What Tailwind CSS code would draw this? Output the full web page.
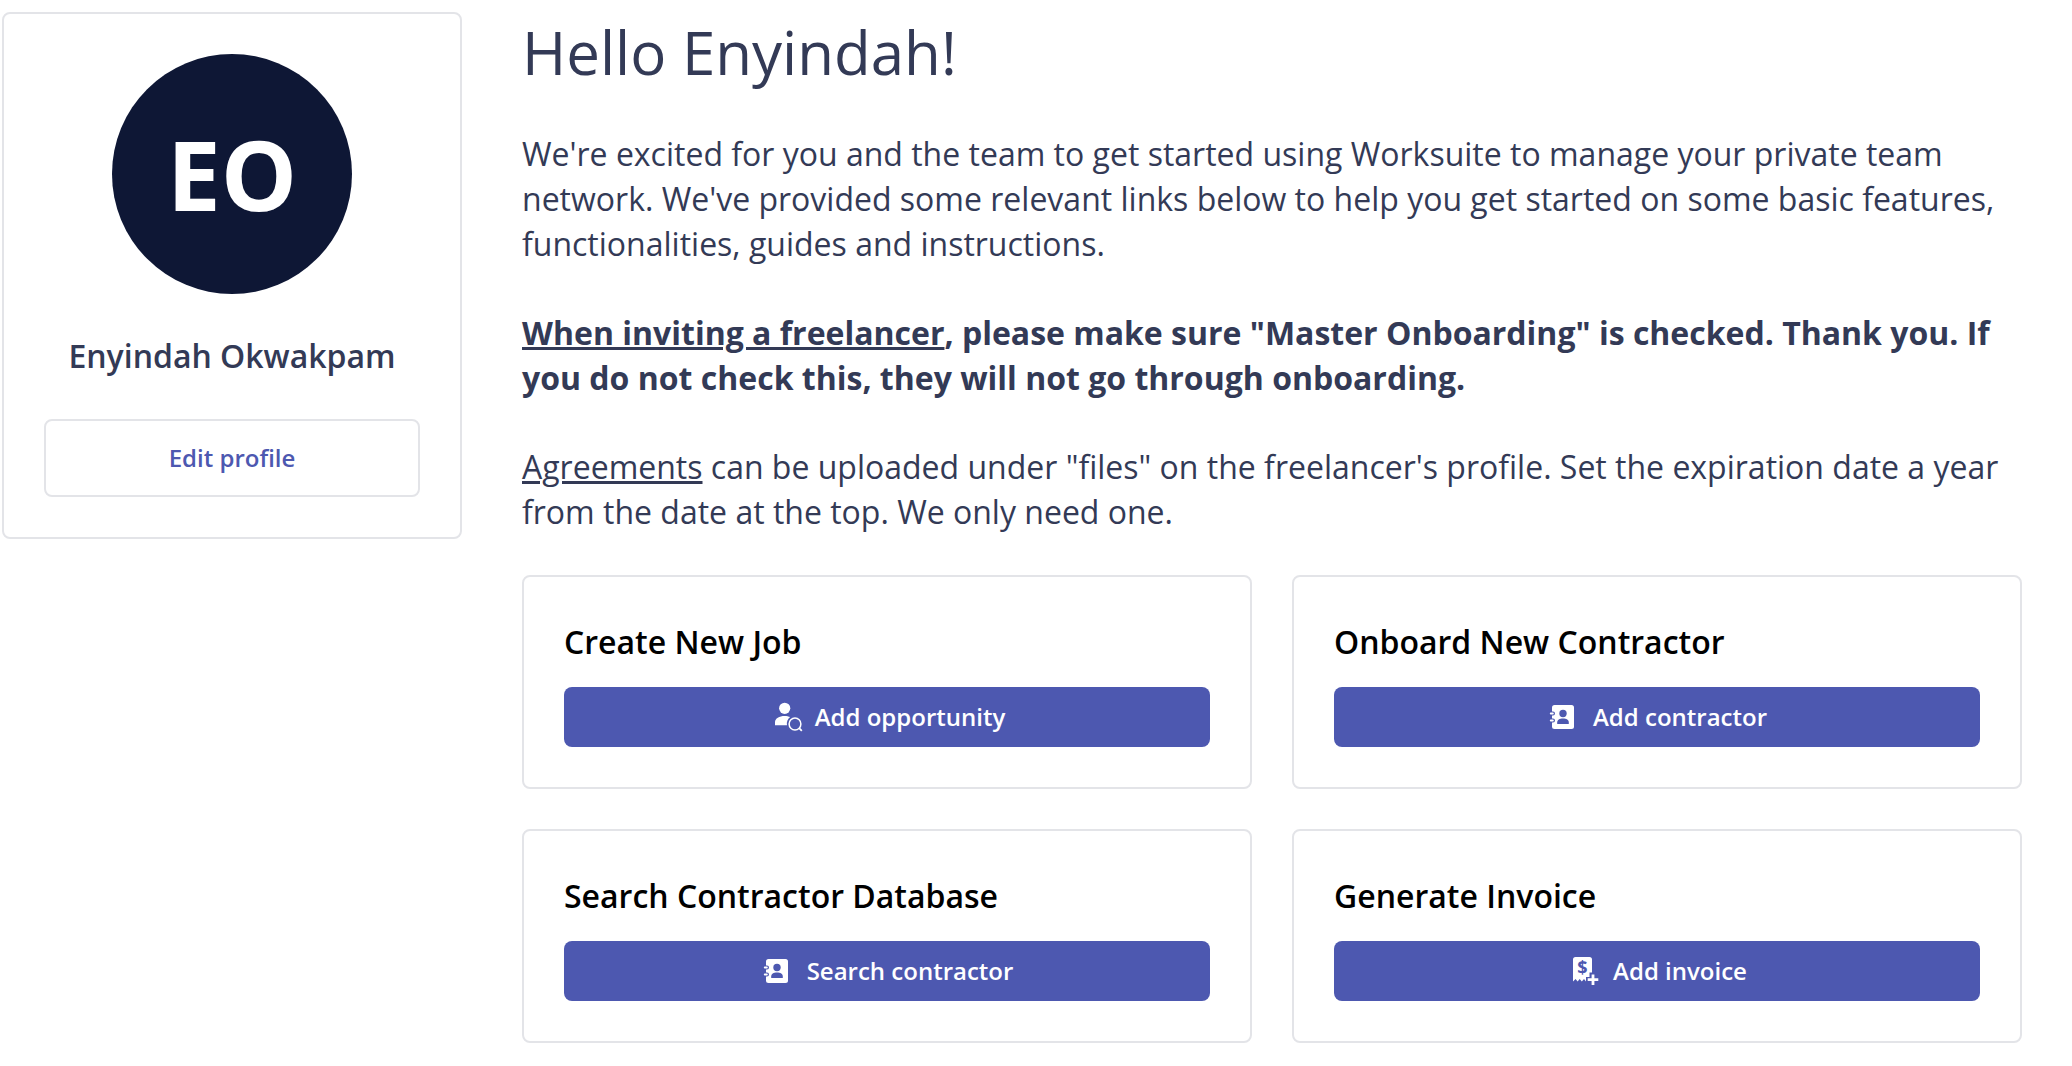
<!DOCTYPE html>
<html lang="en">
<head>
  <meta charset="UTF-8">
  <meta name="viewport" content="width=device-width, initial-scale=1.0">
  <title>Worksuite - Home</title>
  <script src="https://cdn.jsdelivr.net/npm/@tailwindcss/browser@4"></script>
</head>
<body class="bg-white font-['Open_Sans',sans-serif] text-[#333a56]">
  <div class="flex items-start gap-[60px] pt-3 pr-[50px] pb-5 pl-0.5">

    <!-- Profile card -->
    <aside class="flex w-[460px] shrink-0 flex-col items-center rounded-lg border-2 border-[#e3e4e8] p-10">
      <div class="flex size-60 items-center justify-center rounded-full bg-[#0e1735] text-8xl font-bold text-white">EO</div>
      <h2 class="mt-10 text-[32px] leading-[43px] font-semibold">Enyindah Okwakpam</h2>
      <button type="button" class="mt-[42px] h-[78px] w-full rounded-lg border-2 border-[#e3e4e8] text-2xl font-semibold text-[#4d58b0]">Edit profile</button>
    </aside>

    <main class="min-w-0 flex-1">
      <h1 class="text-[60px] leading-20">Hello Enyindah!</h1>

      <div class="mt-[39px] flex flex-col gap-11 text-[32px] leading-[45px]">
        <p>We're excited for you and the team to get started using Worksuite to manage your private team network. We've provided some relevant links below to help you get started on some basic features, functionalities, guides and instructions.</p>
        <p class="font-bold"><a href="#" class="underline">When inviting a freelancer</a>, please make sure "Master Onboarding" is checked. Thank you. If you do not check this, they will not go through onboarding.</p>
        <p><a href="#" class="underline">Agreements</a> can be uploaded under "files" on the freelancer's profile. Set the expiration date a year from the date at the top. We only need one.</p>
      </div>

      <!-- Quick actions -->
      <div class="mt-[41px] grid grid-cols-2 gap-10 text-black">
        <section class="rounded-lg border-2 border-[#e3e4e8] p-10">
          <h3 class="mb-[21px] text-[32px] leading-[49px] font-semibold">Create New Job</h3>
          <button type="button" class="flex h-15 w-full items-center justify-center gap-2.5 rounded-lg bg-[#4d58b0] text-2xl font-semibold text-white">
            <svg class="size-9" viewBox="0 0 36 36" fill="none" aria-hidden="true">
              <circle cx="15.7" cy="9.3" r="5.6" fill="#fff"/>
              <path d="M6 26.3v-3.1c0-3.8 4.3-6.2 9.7-6.2 2 0 3.9.4 5.4 1.1A8.6 8.6 0 0 0 18 26.3z" fill="#fff"/>
              <circle cx="26" cy="25" r="5.9" stroke="#fff" stroke-width="1.5"/>
              <path d="M30.2 29.2l2.6 2.6" stroke="#fff" stroke-width="1.8"/>
            </svg>
            Add opportunity
          </button>
        </section>

        <section class="rounded-lg border-2 border-[#e3e4e8] p-10">
          <h3 class="mb-[21px] text-[32px] leading-[49px] font-semibold">Onboard New Contractor</h3>
          <button type="button" class="flex h-15 w-full items-center justify-center gap-2.5 rounded-lg bg-[#4d58b0] text-2xl font-semibold text-white">
            <svg class="size-9" viewBox="0 0 36 36" fill="none" aria-hidden="true">
              <rect x="5" y="6" width="22" height="24" rx="2.5" fill="#fff"/>
              <path d="M4 14.5h2M4 21.5h2" stroke="#4d58b0" stroke-width="4" stroke-linecap="round"/>
              <path d="M3.8 14.5h2M3.8 21.5h2" stroke="#fff" stroke-width="2" stroke-linecap="round"/>
              <circle cx="16" cy="14.5" r="3.7" fill="#4d58b0"/>
              <path d="M10.2 25v-1.6c0-2.7 2.3-4 5.8-4s5.8 1.3 5.8 4V25z" fill="#4d58b0"/>
            </svg>
            Add contractor
          </button>
        </section>

        <section class="rounded-lg border-2 border-[#e3e4e8] p-10">
          <h3 class="mb-[21px] text-[32px] leading-[49px] font-semibold">Search Contractor Database</h3>
          <button type="button" class="flex h-15 w-full items-center justify-center gap-2.5 rounded-lg bg-[#4d58b0] text-2xl font-semibold text-white">
            <svg class="size-9" viewBox="0 0 36 36" fill="none" aria-hidden="true">
              <rect x="5" y="6" width="22" height="24" rx="2.5" fill="#fff"/>
              <path d="M4 14.5h2M4 21.5h2" stroke="#4d58b0" stroke-width="4" stroke-linecap="round"/>
              <path d="M3.8 14.5h2M3.8 21.5h2" stroke="#fff" stroke-width="2" stroke-linecap="round"/>
              <circle cx="16" cy="14.5" r="3.7" fill="#4d58b0"/>
              <path d="M10.2 25v-1.6c0-2.7 2.3-4 5.8-4s5.8 1.3 5.8 4V25z" fill="#4d58b0"/>
            </svg>
            Search contractor
          </button>
        </section>

        <section class="rounded-lg border-2 border-[#e3e4e8] p-10">
          <h3 class="mb-[21px] text-[32px] leading-[49px] font-semibold">Generate Invoice</h3>
          <button type="button" class="flex h-15 w-full items-center justify-center gap-2.5 rounded-lg bg-[#4d58b0] text-2xl font-semibold text-white">
            <svg class="size-9" viewBox="0 0 36 36" fill="none" aria-hidden="true">
              <path d="M6 6.5A2.5 2.5 0 0 1 8.5 4h14A2.5 2.5 0 0 1 25 6.500V19.500h-2.500V24H19v4.600l-2-2.600-2.200 2.600-2.100-2.600-2.100 2.600-2-2.600L6 28.600z" fill="#fff"/>
              <text x="15.5" y="21" text-anchor="middle" font-size="18" font-weight="700" fill="#4d58b0">$</text>
              <path d="M26 21.4V32M20.700 26.700h10.600" stroke="#fff" stroke-width="2.800"/>
            </svg>
            Add invoice
          </button>
        </section>
      </div>
    </main>
  </div>
</body>
</html>
